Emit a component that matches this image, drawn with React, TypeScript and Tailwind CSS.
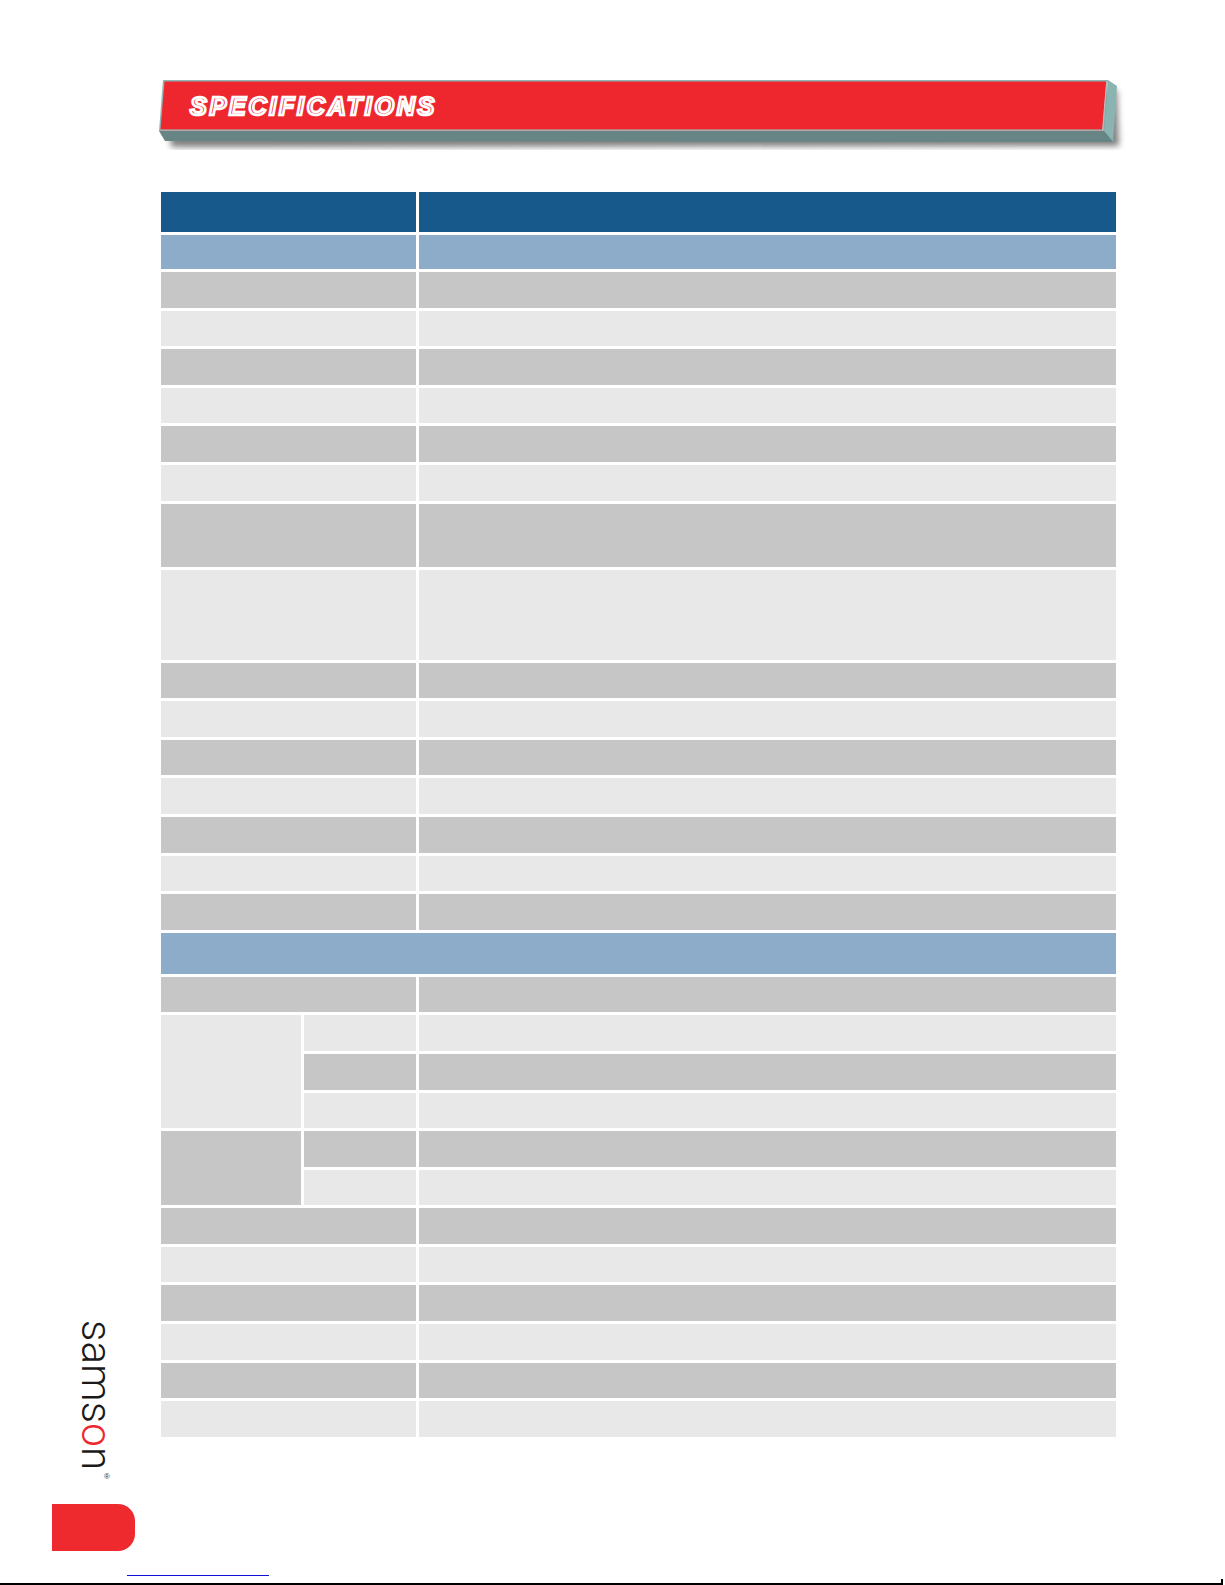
import React from "react";

type Cell = { cls: string };

const G = "bg-[#c6c6c6]";
const L = "bg-[#e8e8e8]";

function Banner() {
  return (
    <div className="relative w-[970px] h-[72px]">
      <svg
        className="absolute inset-0"
        width="970"
        height="72"
        viewBox="0 0 970 72"
      >
        <defs>
          <filter id="bshadow" x="-5%" y="-60%" width="110%" height="220%">
            <feGaussianBlur stdDeviation="3.2" />
          </filter>
        </defs>
        <polygon
          points="12,8 962,12 964,68 16,69"
          fill="#000"
          opacity="0.5"
          filter="url(#bshadow)"
        />
        <polygon points="8,2 953,2 949,53 4,53" fill="#8fb6b5" />
        <polygon points="953,2 962,8 958,64 949,53" fill="#8ab4b2" />
        <polygon points="4,53 949,53 958,64 10,63" fill="#668584" />
        <polygon points="9.5,3.5 951.5,3.5 947.5,51.5 5.5,51.5" fill="#ee262d" />
        <line x1="5" y1="52.3" x2="948" y2="52.3" stroke="#b3a7a7" strokeWidth="1.2" />
        <line x1="951.6" y1="3.5" x2="947.6" y2="52" stroke="#c8b9b9" strokeWidth="1" />
      </svg>
      <div className="relative pl-[35px] pt-[16px]">
        <span className="font-['Liberation_Sans',Arial,sans-serif] font-bold italic text-[25px] leading-none tracking-[2.8px] text-[#ee262d] [-webkit-text-stroke:2.6px_white]">
          SPECIFICATIONS
        </span>
      </div>
    </div>
  );
}

function SpecTable() {
  const cells: Cell[] = [];
  cells.push({ cls: "col-span-2 bg-[#17598a]" });
  cells.push({ cls: "bg-[#17598a]" });
  cells.push({ cls: "col-span-2 bg-[#8dacca]" });
  cells.push({ cls: "bg-[#8dacca]" });
  [G, L, G, L, G, L].forEach((c) => {
    cells.push({ cls: "col-span-2 " + c });
    cells.push({ cls: c });
  });
  cells.push({ cls: "col-span-2 " + G });
  cells.push({ cls: G });
  cells.push({ cls: "col-span-2 " + L });
  cells.push({ cls: L });
  [G, L, G, L, G, L, G].forEach((c) => {
    cells.push({ cls: "col-span-2 " + c });
    cells.push({ cls: c });
  });
  cells.push({ cls: "col-span-3 bg-[#8dacca]" });
  cells.push({ cls: "col-span-2 " + G });
  cells.push({ cls: G });
  cells.push({ cls: "row-span-3 " + L });
  cells.push({ cls: L });
  cells.push({ cls: L });
  cells.push({ cls: G });
  cells.push({ cls: G });
  cells.push({ cls: L });
  cells.push({ cls: L });
  cells.push({ cls: "row-span-2 " + G });
  cells.push({ cls: G });
  cells.push({ cls: G });
  cells.push({ cls: L });
  cells.push({ cls: L });
  [G, L, G, L, G, L].forEach((c) => {
    cells.push({ cls: "col-span-2 " + c });
    cells.push({ cls: c });
  });

  return (
    <div className="grid w-[955px] grid-cols-[140px_112px_697px] gap-[3px] grid-rows-[40px_34px_repeat(6,35.6px)_63px_90px_repeat(7,35.6px)_41px_repeat(12,35.6px)]">
      {cells.map((c, i) => (
        <div key={i} className={c.cls} />
      ))}
    </div>
  );
}

function Logo() {
  return (
    <div className="flex flex-col items-start ml-[78px]">
      <div className="[writing-mode:vertical-rl] font-['Roboto',sans-serif] font-light text-[42px] leading-[36px] text-[#1a1a1a] tracking-[0.2px]">
        sams<span className="text-[#ee262d]">o</span>n
      </div>
      <div className="ml-[26px] mt-[3px] h-[8px] font-['Liberation_Sans',Arial,sans-serif] text-[8px] leading-none text-[#333]">
        ®
      </div>
    </div>
  );
}

export default function App() {
  return (
    <div className="w-[1225px] h-[1585px] bg-white flex flex-col overflow-hidden">
      <div className="flex flex-1 min-h-0">
        <div className="w-[155px] shrink-0 flex flex-col justify-end pb-[24px]">
          <Logo />
          <div className="mt-[23px] ml-[52px] w-[83px] h-[47px] rounded-r-[17px] bg-[#ee2a2f]" />
        </div>
        <div className="flex flex-col pt-[78px]">
          <Banner />
          <div className="mt-[42px] ml-[6px]">
            <SpecTable />
          </div>
        </div>
      </div>
      <div className="h-px ml-[127px] w-[142px] bg-[#1010d8]" />
      <div className="mt-[3px] h-[6px] flex items-end">
        <div className="h-[2px] w-[1221px] bg-black" />
        <div className="h-[6px] w-[2px] bg-black" />
      </div>
    </div>
  );
}
